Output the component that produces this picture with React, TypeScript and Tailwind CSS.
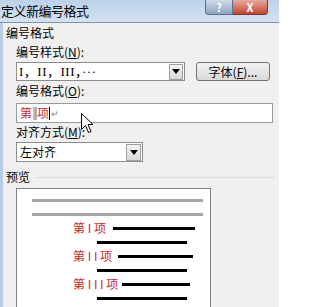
import React from "react";

const cjk = { fontFamily: '"Noto Sans CJK SC", "Noto Sans", sans-serif' };

function Arrow() {
  return (
    <svg width="8" height="5" viewBox="0 0 8 5">
      <path d="M0 0 H8 L4 5 Z" fill="#000" />
    </svg>
  );
}

function Row({ label, lineW, gap }: { label: React.ReactNode; lineW: string; gap: string }) {
  return (
    <div className="h-[14px] flex items-center pl-[56px]">
      <span className="text-[12px] leading-[14px] text-[#c8282e] whitespace-pre">{label}</span>
      <div className={`${gap} ${lineW} h-[3px] bg-black`} />
    </div>
  );
}

export default function App() {
  return (
    <div
      className="w-[279px] h-[307px] overflow-hidden flex flex-col relative bg-[#f0f0f0] text-black"
      style={cjk}
    >
      {/* title bar */}
      <div className="h-[23px] flex-none flex items-start justify-between bg-gradient-to-b from-[#bcd1ea] to-[#d4e2f2] border-b border-[#7d93b0]">
        <span className="text-[13px] leading-[22px] pl-[1px] tracking-[-0.5px]">定义新编号格式</span>
        <div className="flex mr-[11px]">
          <div className="w-[28px] h-[15px] rounded-bl-[4px] border border-t-0 border-[#5f728c] bg-gradient-to-b from-[#cfdbe9] to-[#8ea4c0] flex items-center justify-center text-white text-[11px] font-bold leading-none">
            ?
          </div>
          <div className="w-[35px] h-[15px] rounded-br-[4px] border border-t-0 border-l-0 border-[#7a3a33] bg-gradient-to-b from-[#e6a99c] to-[#c1412f] flex items-center justify-center text-white text-[11px] font-bold leading-none">
            X
          </div>
        </div>
      </div>

      {/* body */}
      <div className="flex-1 flex flex-col border-l-[3px] border-[#b7cbe3] pl-[3px] pt-[3px]">
        <div className="text-[12px] leading-[14px]">编号格式</div>

        <div className="pl-[10px] pr-[5px] flex flex-col">
          <div className="mt-[5px] text-[12px] leading-[14px]">
            编号样式(<span className="underline">N</span>):
          </div>
          <div className="mt-[3px] flex items-center">
            <div className="w-[169px] h-[19px] bg-white border border-[#8c8c8c] flex items-center justify-between pl-[2px] pr-[1px]">
              <span className="text-[13px] leading-none tracking-[0.5px]" style={{ fontFamily: '"Liberation Serif", "Noto Sans CJK SC", serif' }}>
                I，II，III，···
              </span>
              <div className="w-[14px] h-[16px] border border-[#a0a0a0] bg-gradient-to-b from-[#f4f4f4] to-[#d8d8d8] flex items-center justify-center">
                <Arrow />
              </div>
            </div>
            <div className="ml-[11px] w-[74px] h-[19px] rounded-[3px] border border-[#707070] bg-gradient-to-b from-[#f3f3f3] to-[#d9d9d9] flex items-center justify-center text-[12px] leading-none">
              字体(<span className="underline">F</span>)...
            </div>
          </div>

          <div className="mt-[3px] text-[12px] leading-[14px]">
            编号格式(<span className="underline">O</span>):
          </div>
          <div className="mt-[5px] w-[257px] h-[20px] bg-white border border-[#9a9a9a] flex items-center pl-[3px]">
            <span className="text-[12px] leading-none text-[#c8282e]">第</span>
            <span className="ml-[1px] w-[4px] h-[13px] bg-[#c9b9b9] flex justify-center">
              <span className="w-[1px] h-full bg-[#d88]" />
            </span>
            <span className="text-[12px] leading-none text-[#c8282e]">项</span>
            <span className="w-[1px] h-[13px] bg-black" />
            <span className="text-[9px] leading-none text-[#888] ml-[1px]">↵</span>
          </div>

          <div className="mt-[2px] text-[12px] leading-[14px]">
            对齐方式(<span className="underline">M</span>):
          </div>
          <div className="mt-[3px] w-[127px] h-[20px] bg-white border border-[#8c8c8c] flex items-center justify-between pl-[3px] pr-[1px]">
            <span className="text-[12px] leading-none">左对齐</span>
            <div className="w-[15px] h-[17px] border border-[#a0a0a0] bg-gradient-to-b from-[#f4f4f4] to-[#d8d8d8] flex items-center justify-center">
              <Arrow />
            </div>
          </div>
        </div>

        <div className="mt-[8px] flex items-center pr-[4px]">
          <span className="text-[12px] leading-[14px]">预览</span>
          <div className="ml-[5px] flex-1 h-[1px] bg-[#d8dde4]" />
        </div>

        <div className="ml-[10px] mt-[4px] w-[195px] flex-1 bg-white border border-[#828282] border-b-0 pt-[4px] flex flex-col">
          <div className="h-[14px] flex items-center pl-[15px]">
            <div className="w-[171px] h-[3px] bg-[#a6a6a6]" />
          </div>
          <div className="h-[14px] flex items-center pl-[15px]">
            <div className="w-[171px] h-[3px] bg-[#a6a6a6]" />
          </div>
          <Row label={"第 I 项"} gap="ml-[7px]" lineW="w-[82px]" />
          <div className="h-[14px] flex items-center pl-[80px]">
            <div className="w-[90px] h-[3px] bg-black" />
          </div>
          <Row label={"第 I I 项"} gap="ml-[6px]" lineW="w-[75px]" />
          <div className="h-[14px] flex items-center pl-[80px]">
            <div className="w-[90px] h-[3px] bg-black" />
          </div>
          <Row label={"第 I I I 项"} gap="ml-[4px]" lineW="w-[68px]" />
          <div className="h-[14px] flex items-center pl-[80px]">
            <div className="w-[90px] h-[3px] bg-black" />
          </div>
        </div>
      </div>

      {/* mouse pointer */}
      <svg className="absolute left-[81px] top-[113px]" width="13" height="21" viewBox="0 0 13 21">
        <path
          d="M0.5 0.5 L0.5 16.5 L4.5 12.5 L7.5 19.5 L10 18.5 L7 11.5 L12 11.5 Z"
          fill="#fff"
          stroke="#000"
          strokeWidth="1"
          strokeLinejoin="round"
        />
      </svg>
    </div>
  );
}
